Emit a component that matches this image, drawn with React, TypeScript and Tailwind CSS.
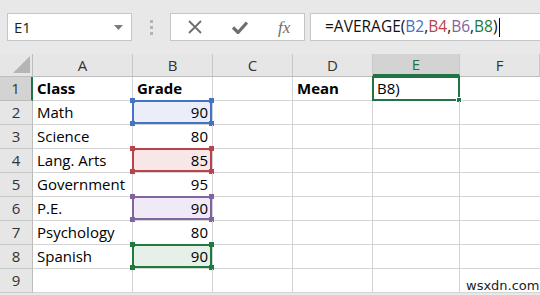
import React from "react";

const font = { fontFamily: '"Open Sans", "Noto Sans", sans-serif' };

const cols = ["A", "B", "C", "D", "E", "F"];
const widths = ["w-[100px]", "w-[80px]", "w-[80px]", "w-[80px]", "w-[87px]", "w-[80px]"];

type Range = { border: string; fill: string; handle: string };

const ranges: Record<number, Range> = {
  2: { border: "border-[#4472c4]", fill: "bg-[#e9eef8]", handle: "bg-[#4472c4]" },
  4: { border: "border-[#b8434b]", fill: "bg-[#f9e7e8]", handle: "bg-[#b8434b]" },
  6: { border: "border-[#8064a2]", fill: "bg-[#efeaf6]", handle: "bg-[#8064a2]" },
  8: { border: "border-[#1f7a3e]", fill: "bg-[#e5f0e8]", handle: "bg-[#1f7a3e]" },
};

const rows: { a: string; b: string; d?: string; bold?: boolean }[] = [
  { a: "Class", b: "Grade", d: "Mean", bold: true },
  { a: "Math", b: "90" },
  { a: "Science", b: "80" },
  { a: "Lang. Arts", b: "85" },
  { a: "Government", b: "95" },
  { a: "P.E.", b: "90" },
  { a: "Psychology", b: "80" },
  { a: "Spanish", b: "90" },
  { a: "", b: "" },
];

function RangeBox({ r }: { r: Range }) {
  return (
    <div className={`absolute -left-[1px] -top-[1px] right-0 bottom-0 border-2 ${r.border} ${r.fill}`}>
      <span className={`absolute -left-[4px] -top-[4px] w-[5px] h-[5px] ${r.handle}`} />
      <span className={`absolute -right-[4px] -top-[4px] w-[5px] h-[5px] ${r.handle}`} />
      <span className={`absolute -left-[4px] -bottom-[4px] w-[5px] h-[5px] ${r.handle}`} />
      <span className={`absolute -right-[4px] -bottom-[4px] w-[5px] h-[5px] ${r.handle}`} />
    </div>
  );
}

function Toolbar() {
  return (
    <div className="h-[54px] bg-[#e8e8e8] flex items-start pt-[13px]">
      <div className="ml-[7px] w-[125px] h-[28px] bg-white border border-[#c6c6c6] flex items-center justify-between pl-[6px] pr-[8px]">
        <span className="text-[15px] text-[#222]">E1</span>
        <svg width="9" height="5" viewBox="0 0 9 5">
          <path d="M0 0 L9 0 L4.5 5 Z" fill="#7a7a7a" />
        </svg>
      </div>
      <div className="w-[38px] h-[28px] flex flex-col items-center justify-center gap-[3px]">
        <span className="w-[3px] h-[3px] bg-[#b4b4b4]" />
        <span className="w-[3px] h-[3px] bg-[#b4b4b4]" />
        <span className="w-[3px] h-[3px] bg-[#b4b4b4]" />
      </div>
      <div className="w-[135px] h-[28px] bg-white border border-[#c6c6c6] flex items-center">
        <svg className="ml-[17px]" width="14" height="14" viewBox="0 0 14 14">
          <path d="M1 1 L13 13 M13 1 L1 13" stroke="#6e6e6e" strokeWidth="1.8" />
        </svg>
        <svg className="ml-[30px]" width="16" height="13" viewBox="0 0 16 13">
          <path d="M1 6.5 L6 11.5 L15 1.5" stroke="#6e6e6e" strokeWidth="3.2" fill="none" />
        </svg>
        <span
          className="ml-[30px] text-[17px] italic text-[#6e6e6e] leading-none"
          style={{ fontFamily: '"Liberation Serif", serif' }}
        >
          fx
        </span>
      </div>
      <div className="ml-[5px] flex-1 h-[28px] bg-white border border-[#c6c6c6] border-r-0 flex items-center pl-[14px]">
        <span className="text-[15.5px] text-[#111]">
          =AVERAGE(<span className="text-[#4472c4]">B2</span>,<span className="text-[#b8434b]">B4</span>,
          <span className="text-[#8064a2]">B6</span>,<span className="text-[#1f7a3e]">B8</span>)
        </span>
        <span className="ml-[1px] w-[1px] h-[19px] bg-black" />
      </div>
    </div>
  );
}

export default function App() {
  return (
    <div className="w-[540px] h-[295px] overflow-hidden bg-[#e8e8e8] relative" style={font}>
      <Toolbar />
      <div className="flex h-[23px] bg-[#e6e6e6] border-b border-[#bdbdbd]">
        <div className="w-[33px] border-r border-[#bdbdbd] relative">
          <svg className="absolute right-[2px] bottom-[3px]" width="17" height="17" viewBox="0 0 17 17">
            <path d="M17 0 L17 17 L0 17 Z" fill="#b5b5b5" />
          </svg>
        </div>
        {cols.map((c, i) => (
          <div
            key={c}
            className={`${widths[i]} shrink-0 border-r border-[#c8c8c8] flex items-center justify-center text-[15px] ${
              c === "E" ? "bg-[#d3d3d3] text-[#217346] border-b-2 border-b-[#217346]" : "text-[#333]"
            }`}
          >
            {c}
          </div>
        ))}
      </div>
      {rows.map((r, idx) => {
        const n = idx + 1;
        const range = ranges[n];
        return (
          <div key={n} className="flex h-[24px] bg-white">
            <div
              className={`w-[33px] shrink-0 flex items-center justify-center text-[15px] text-[#333] border-b ${
                n === 1
                  ? "bg-[#d3d3d3] border-r-2 border-r-[#217346] border-b-[#bdbdbd]"
                  : "bg-[#e6e6e6] border-r border-r-[#bdbdbd] border-b-[#c8c8c8]"
              }`}
            >
              {n}
            </div>
            <div
              className={`w-[100px] shrink-0 border-r border-b border-[#d4d4d4] flex items-center pl-[4px] text-[15px] text-black whitespace-nowrap ${
                r.bold ? "font-bold" : ""
              }`}
            >
              {r.a}
            </div>
            <div
              className={`w-[80px] shrink-0 border-r border-b border-[#d4d4d4] relative flex items-center text-[15px] text-black ${
                r.bold ? "font-bold pl-[4px]" : "justify-end pr-[4px]"
              }`}
            >
              {range && <RangeBox r={range} />}
              <span className="relative">{r.b}</span>
            </div>
            <div className="w-[80px] shrink-0 border-r border-b border-[#d4d4d4]" />
            <div className="w-[80px] shrink-0 border-r border-b border-[#d4d4d4] flex items-center pl-[4px] text-[15px] font-bold text-black">
              {r.d}
            </div>
            <div className="w-[87px] shrink-0 border-r border-b border-[#d4d4d4] relative flex items-center pl-[4px] text-[15px] text-black">
              {n === 1 && (
                <>
                  <div className="absolute -left-[1px] -top-[1px] right-[-1px] bottom-[-1px] border-2 border-[#217346]">
                    <span className="absolute -right-[4px] -bottom-[4px] w-[6px] h-[6px] bg-[#217346] border border-white" />
                  </div>
                  <span className="relative">B8)</span>
                </>
              )}
            </div>
            <div className="flex-1 border-b border-[#d4d4d4]" />
          </div>
        );
      })}
      <div
        className="absolute left-[466px] top-[276px] text-[13px] text-[#222]"
        style={{ fontFamily: '"DejaVu Sans", sans-serif' }}
      >
        wsxdn.com
      </div>
    </div>
  );
}
